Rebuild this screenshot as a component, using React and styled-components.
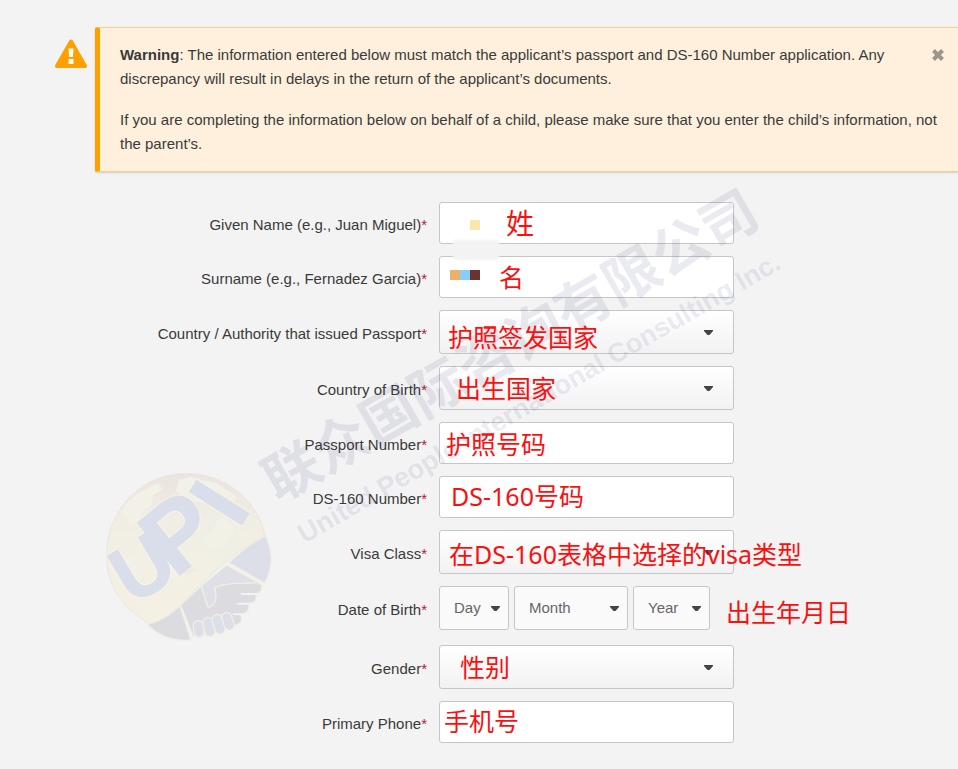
import React from 'react'
import styled, { createGlobalStyle } from 'styled-components'

const App = () => {
  return (
    <Page>
      <GlobalStyle />
      <AlertRow>
        <WarningIcon viewBox="0 0 32 30" aria-hidden="true">
          <path d="M16 2.5 L30 27 H2 Z" fill="#ff9f00" stroke="#ff9f00" strokeWidth="4" strokeLinejoin="round" />
          <path d="M13.5 9.5h5l-0.6 8.5h-3.8z M13.5 20h5v5h-5z" fill="#fff" />
        </WarningIcon>
        <Alert role="alert">
          <AlertP>
            <strong>Warning</strong>: The information entered below must match the applicant’s passport and DS-160 Number application. Any discrepancy will result in delays in the return of the applicant’s documents.
          </AlertP>
          <AlertP>
            If you are completing the information below on behalf of a child, please make sure that you enter the child’s information, not the parent’s.
          </AlertP>
          <CloseButton type="button" aria-label="Close">
            <svg width="14" height="14" viewBox="0 0 14 14">
              <path d="M2.5 2.5 L11.5 11.5 M11.5 2.5 L2.5 11.5" stroke="#9c958a" strokeWidth="4" />
            </svg>
          </CloseButton>
        </Alert>
      </AlertRow>

      <Form>
        <Row>
          <FieldLabel id="given" text="Given Name (e.g., Juan Miguel)" />
          <Field>
            <TextInput id="given" type="text" />
            <Mosaic $left={31} $top={18}>
              <Tile $color="#fde6ad" />
            </Mosaic>
            <Smudge />
            <Note $left={67} $top={3} $big>姓</Note>
          </Field>
        </Row>
        <Row>
          <FieldLabel id="surname" text="Surname (e.g., Fernadez Garcia)" />
          <Field>
            <TextInput id="surname" type="text" />
            <Mosaic $left={11} $top={14}>
              <Tile $color="#eab06c" />
              <Tile $color="#87cefa" />
              <Tile $color="#6b3232" />
            </Mosaic>
            <Note $left={60} $top={3}>名</Note>
          </Field>
        </Row>
        <Row>
          <FieldLabel id="issuer" text="Country / Authority that issued Passport" />
          <Field>
            <Dropdown id="issuer" />
            <Note $left={9} $top={9}>护照签发国家</Note>
          </Field>
        </Row>
        <Row>
          <FieldLabel id="birthCountry" text="Country of Birth" />
          <Field>
            <Dropdown id="birthCountry" />
            <Note $left={17} $top={4}>出生国家</Note>
          </Field>
        </Row>
        <Row>
          <FieldLabel id="passport" text="Passport Number" />
          <Field>
            <TextInput id="passport" type="text" />
            <Note $left={7} $top={4}>护照号码</Note>
          </Field>
        </Row>
        <Row>
          <FieldLabel id="ds160" text="DS-160 Number" />
          <Field>
            <TextInput id="ds160" type="text" />
            <Note $left={12} $top={2}>DS-160号码</Note>
          </Field>
        </Row>
        <Row>
          <FieldLabel id="visaClass" text="Visa Class" />
          <Field>
            <Dropdown id="visaClass" />
            <Note $left={10} $top={6}>在DS-160表格中选择的visa类型</Note>
          </Field>
        </Row>
        <Row $last>
          <FieldLabel id="day" text="Date of Birth" />
          <Field>
            <DateGroup>
              <Dropdown id="day" label="Day" width={70} small />
              <Dropdown id="month" label="Month" width={114} small />
              <Dropdown id="year" label="Year" width={77} small />
            </DateGroup>
            <Note $left={287} $top={8}>出生年月日</Note>
          </Field>
        </Row>
        <Row>
          <FieldLabel id="gender" text="Gender" />
          <Field>
            <Dropdown id="gender" />
            <Note $left={21} $top={4}>性别</Note>
          </Field>
        </Row>
        <Row>
          <FieldLabel id="phone" text="Primary Phone" />
          <Field>
            <TextInput id="phone" type="tel" />
            <Note $left={5} $top={2}>手机号</Note>
          </Field>
        </Row>
      </Form>

      <Seal />
      <WatermarkCn>联众国际咨询有限公司</WatermarkCn>
      <WatermarkEn>United People International Consulting Inc.</WatermarkEn>
    </Page>
  )
}

export default App

const FieldLabel = ({ id, text }) => (
  <Label htmlFor={id}>
    {text}<Required>*</Required>
  </Label>
)

const Dropdown = ({ id, label, width, small }) => (
  <SelectWrap $width={width}>
    <Select id={id} $small={small} aria-label={label}>
      <option>{label || ''}</option>
    </Select>
    <Caret viewBox="0 0 9 5" $small={small} aria-hidden="true">
      <path d="M0 0H9V1L5.5 5H3.5L0 1Z" fill="#444" />
    </Caret>
  </SelectWrap>
)

const Seal = () => (
  <SealSvg viewBox="0 0 600 570" aria-hidden="true">
    <defs>
      <linearGradient id="globe" x1="0" y1="0" x2="0" y2="1">
        <stop offset="0" stopColor="#ebe3df" />
        <stop offset="0.3" stopColor="#f0eee4" />
        <stop offset="1" stopColor="#f4f1e3" />
      </linearGradient>
    </defs>
    <path d="M180 492 C90 440 48 370 50 282 C54 140 160 40 290 40 C400 40 500 115 525 225 C440 270 370 335 275 430 C245 460 215 485 180 492Z" fill="url(#globe)" stroke="#ece6dc" strokeWidth="3" />
    <path d="M94 162 L110 130 L150 95 L205 70 L218 88 L190 105 L185 135 L160 150 L145 185 L120 200 L118 170Z M258 92 L268 60 L300 50 L380 70 L440 110 L410 160 L350 130 L290 120Z M330 235 L360 220 L395 165 L425 190 L430 225 L395 270 L365 275Z M215 300 L255 300 L285 350 L270 380 L230 340Z M100 300 L130 285 L155 330 L130 350Z" fill="#f2f1e8" />
    <path d="M155 195 L270 345 L320 335 L180 170Z" fill="#efe9de" />
    <Letters>
      <text transform="translate(157 322) rotate(-31)" y="82" fontSize="238">U</text>
      <text transform="translate(266 217) rotate(-39)" y="101" fontSize="292">P</text>
      <text transform="translate(387 128) rotate(-58)" y="93" fontSize="268">I</text>
    </Letters>
    <g stroke="#f1efe4" strokeWidth="4" strokeLinejoin="round">
      <path d="M172 492 C210 485 240 465 270 438 L303 540 C250 545 205 530 172 492Z" fill="#dcdce0" />
      <path d="M416 308 C450 275 490 245 527 227 C550 275 548 325 524 370Z" fill="#dcdee8" />
      <path d="M272 434 L333 378 L410 315 L502 365 L516 376 Q518 398 498 402 Q504 428 476 430 Q482 460 452 462 Q462 490 434 496 L405 480 L310 530Z" fill="#dbdbe0" />
      <path d="M333 378 L410 315 L504 368 L440 370 Q400 372 375 382 L378 410 Q376 440 354 442Z" fill="#dedfe7" />
      <g fill="#dcdee8">
        <rect x="311" y="482" width="30" height="50" rx="15" transform="rotate(-8 326 507)" />
        <rect x="341" y="472" width="32" height="58" rx="16" transform="rotate(-14 357 501)" />
        <rect x="370" y="463" width="32" height="60" rx="16" transform="rotate(-16 386 493)" />
        <rect x="399" y="457" width="30" height="54" rx="15" transform="rotate(-18 414 484)" />
      </g>
    </g>
    <path d="M455 402H500 M443 431H478 M430 463H454" stroke="#f3f3f3" strokeWidth="6" strokeLinecap="round" />
  </SealSvg>
)

const GlobalStyle = createGlobalStyle`
body {
  margin: 0;
  background: #f3f3f3;
  overflow-x: hidden;
}
* {
  box-sizing: border-box;
}
`

const Page = styled.main`
position: relative;
padding: 27px 0 26px;
font-family: 'Liberation Sans', Arial, sans-serif;
font-size: 15px;
line-height: 24px;
color: #3a3a3a;
`

const AlertRow = styled.div`
display: flex;
align-items: flex-start;
gap: 8px;
padding-left: 55px;
`

const WarningIcon = styled.svg`
flex: none;
width: 32px;
height: 30px;
margin-top: 12px;
`

const Alert = styled.div`
position: relative;
flex: 1;
padding: 15px 12px 15px 20px;
background: #fef0dc;
border: solid #fbcf86;
border-width: 1px 0;
border-left: 5px solid #ff9f00;
border-radius: 2px 0 0 2px;
box-shadow: 0 1px 2px rgba(0, 0, 0, 0.15);
`

const AlertP = styled.p`
margin: 0;

& + & {
  margin-top: 17px;
}
`

const CloseButton = styled.button`
position: absolute;
top: 20px;
right: 13px;
display: flex;
padding: 0;
border: 0;
background: none;
cursor: pointer;
`

const Form = styled.form`
margin-top: 30px;
`

const Row = styled.div`
display: grid;
grid-template-columns: 427px minmax(0, 295px);
column-gap: 12px;
align-items: center;
margin-bottom: ${({ $last }) => ($last ? '15px' : '12px')};

&:last-child {
  margin-bottom: 0;
}
`

const Label = styled.label`
padding-top: 3px;
text-align: right;
`

const Required = styled.span`
color: #c0143c;
`

const Field = styled.div`
position: relative;
`

const TextInput = styled.input`
display: block;
width: 100%;
height: 42px;
padding: 0 14px;
border: 1px solid #c6c6c8;
border-radius: 3px;
background: #fff;
font: inherit;
`

const SelectWrap = styled.div`
position: relative;
width: ${({ $width }) => ($width ? `${$width}px` : '100%')};
`

const Select = styled.select`
display: block;
appearance: none;
width: 100%;
height: 44px;
padding: 0 14px;
border: 1px solid #c6c6c8;
border-radius: 3px;
background: ${({ $small }) => ($small ? '#fafafa' : 'linear-gradient(#fff, #f2f2f2)')};
font: inherit;
color: #666;
`

const Caret = styled.svg`
position: absolute;
top: 20px;
right: ${({ $small }) => ($small ? '9px' : '21px')};
width: 9px;
height: 5px;
pointer-events: none;
`

const DateGroup = styled.div`
display: flex;
gap: 5px;
`

const Note = styled.span`
position: absolute;
z-index: 2;
left: ${({ $left }) => $left}px;
top: ${({ $top }) => $top}px;
font-family: 'Noto Sans', 'Noto Sans CJK SC', sans-serif;
font-size: ${({ $big }) => ($big ? '28px' : '25px')};
line-height: 36px;
white-space: nowrap;
color: #fb1010;
pointer-events: none;
`

const Mosaic = styled.div`
position: absolute;
left: ${({ $left }) => $left}px;
top: ${({ $top }) => $top}px;
display: flex;
`

const Tile = styled.span`
width: 10px;
height: 10px;
background: ${({ $color }) => $color};
`

const Smudge = styled.div`
position: absolute;
z-index: 1;
left: 14px;
top: 38px;
width: 46px;
height: 20px;
background: #f3f3f3;
filter: blur(1px);
`

const Watermark = styled.div`
position: absolute;
z-index: 1;
white-space: nowrap;
transform: rotate(-30deg);
transform-origin: 0 50%;
color: rgba(60, 60, 130, 0.11);
font-weight: bold;
pointer-events: none;
`

const WatermarkCn = styled(Watermark)`
left: 266px;
top: 442px;
font-family: 'Noto Sans CJK SC', sans-serif;
font-size: 56px;
line-height: 80px;
`

const WatermarkEn = styled(Watermark)`
left: 300px;
top: 520px;
font-size: 27px;
line-height: 32px;
`

const SealSvg = styled.svg`
position: absolute;
left: 90px;
top: 460px;
width: 200px;
height: 190px;
overflow: visible;
pointer-events: none;
`

const Letters = styled.g`
fill: #dadeea;
stroke: #dadeea;
stroke-width: 5px;
font-family: 'Liberation Sans', Arial, sans-serif;
font-weight: bold;
text-anchor: middle;
filter: drop-shadow(0 0 3px #f8f6e6) drop-shadow(0 0 2px #f8f6e6);
`
